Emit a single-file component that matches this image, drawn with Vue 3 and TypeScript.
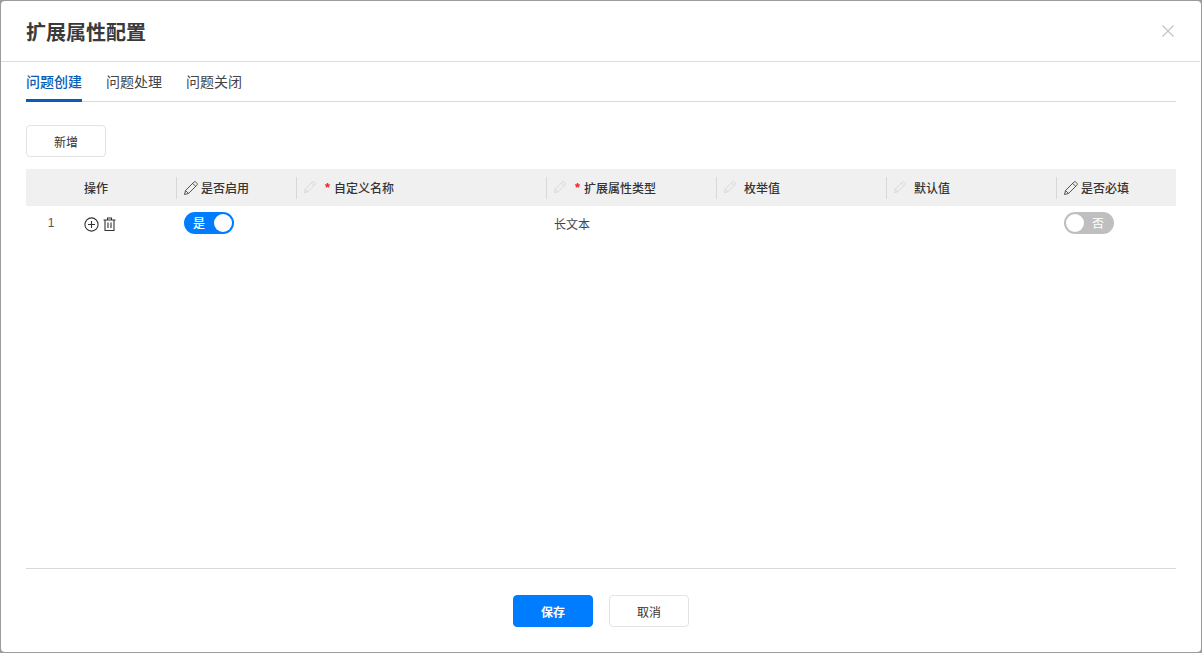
<script setup lang="ts">
interface Col { label: string; width: number; pen: 'dark' | 'light'; required?: boolean; gap?: boolean }
const cols: Col[] = [
  { label: '是否启用', width: 120, pen: 'dark' },
  { label: '自定义名称', width: 250, pen: 'light', required: true },
  { label: '扩展属性类型', width: 170, pen: 'light', required: true },
  { label: '枚举值', width: 170, pen: 'light', gap: true },
  { label: '默认值', width: 170, pen: 'light', gap: true },
  { label: '是否必填', width: 120, pen: 'dark' },
]
const tabs = ['问题创建', '问题处理', '问题关闭']
</script>

<template>
  <div class="screen">
    <div class="dialog">
      <header class="head">
        <h1 class="title">扩展属性配置</h1>
        <svg class="close" width="12" height="12" viewBox="0 0 12 12"><path d="M.5.5l11 11M11.5.5l-11 11" stroke="#c4c4c4" stroke-width="1.3" fill="none"/></svg>
      </header>
      <nav class="tabs">
        <span v-for="(t, i) in tabs" :key="t" class="tab" :class="{ active: i === 0 }">{{ t }}</span>
      </nav>
      <main class="body">
        <button class="btn add">新增</button>
        <div class="table">
          <div class="thead">
            <div class="th idx"></div>
            <div class="th ops">操作</div>
            <div v-for="c in cols" :key="c.label" class="th sep" :style="{ width: c.width + 'px' }">
              <svg class="pen" :class="c.pen" viewBox="1 1 13 13">
                <path d="M1.500 13.500l.9-3.700 7.600-7.600c.7-.7 1.600-.7 2.200 0l.6.6c.7.7.7 1.500 0 2.200l-7.600 7.600zM2.400 9.800l2.800 2.800M9 3.200l2.800 2.800" fill="none" stroke="currentColor" stroke-width=".85" stroke-linejoin="round"/>
              </svg>
              <span v-if="c.required" class="req">*</span>
              <span class="lbl" :class="{ spaced: c.gap }">{{ c.label }}</span>
            </div>
          </div>
          <div class="tr">
            <div class="td idx num">1</div>
            <div class="td ops icons">
              <svg width="15" height="15" viewBox="0 0 15 15"><circle cx="7.500" cy="7.500" r="6.600" fill="none" stroke="#333" stroke-width="1.1"/><path d="M7.500 4v7M4 7.500h7" stroke="#333" stroke-width="1.1"/></svg>
              <svg width="13" height="14" viewBox="0 0 13 14"><path d="M.5 3h12M4.500 3V1h4v2M2 3v10.500h9V3M5 5.500v5.500M8 5.500v5.500" fill="none" stroke="#333" stroke-width="1.1"/></svg>
            </div>
            <div class="td" style="width:120px"><span class="sw on"><span class="sw-text">是</span><i class="knob"></i></span></div>
            <div class="td" style="width:250px"></div>
            <div class="td text" style="width:170px">长文本</div>
            <div class="td" style="width:170px"></div>
            <div class="td" style="width:170px"></div>
            <div class="td" style="width:120px"><span class="sw off"><i class="knob"></i><span class="sw-text">否</span></span></div>
          </div>
        </div>
      </main>
      <footer class="foot">
        <button class="btn primary">保存</button>
        <button class="btn">取消</button>
      </footer>
    </div>
  </div>
</template>

<style>
html, body { margin: 0; padding: 0; overflow: hidden; }
</style>

<style scoped>
.screen {
  width: 1202px;
  height: 653px;
  box-sizing: border-box;
  padding: 1px;
  background: #9c9c9c;
  font-family: "Noto Sans CJK SC", "Liberation Sans", sans-serif;
  color: #333;
}
.dialog {
  height: 100%;
  background: #fff;
  border-radius: 4px;
  display: flex;
  flex-direction: column;
}
.head {
  height: 61px;
  flex: none;
  box-sizing: border-box;
  border-bottom: 1px solid #dcdcdc;
  display: flex;
  align-items: center;
  justify-content: space-between;
  padding: 0 26px 0 25px;
  margin-right: 1px;
}
.title {
  margin: 0;
  padding-top: 2px;
  font-size: 20px;
  font-weight: 700;
  line-height: 58px;
  color: #3a3a3a;
}
.tabs {
  display: flex;
  gap: 24px;
  height: 40px;
  box-sizing: border-box;
  margin: 0 25px;
  border-bottom: 1px solid #d9d9d9;
  flex: none;
}
.tab {
  font-size: 14px;
  line-height: 38px;
  height: 40px;
  box-sizing: border-box;
  color: #444;
}
.tab.active {
  color: #0a5cb5;
  font-weight: 500;
  border-bottom: 3px solid #0a5cb5;
}
.body {
  flex: 1;
  min-height: 0;
  padding: 23px 25px 0;
  display: flex;
  flex-direction: column;
  align-items: flex-start;
}
.btn {
  width: 80px;
  height: 32px;
  padding: 0;
  border: 1px solid #e3e3e3;
  border-radius: 4px;
  background: #fff;
  color: #333;
  font: 12px "Noto Sans CJK SC", "Liberation Sans", sans-serif;
}
.btn.primary {
  background: #007dff;
  border-color: #007dff;
  color: #fff;
  font-weight: 700;
}
.table { margin-top: 12px; width: 1150px; }
.thead { display: flex; height: 37px; background: #f0f0f0; align-items: center; }
.tr { display: flex; height: 34px; align-items: center; }
.idx { width: 50px; flex: none; }
.ops { width: 100px; flex: none; box-sizing: border-box; padding-left: 8px; }
.th {
  font-size: 12px;
  font-weight: 500;
  color: #333;
}
.th.sep {
  flex: none;
  box-sizing: border-box;
  height: 22px;
  border-left: 1px solid #d8d8d8;
  padding-left: 7px;
  display: flex;
  align-items: center;
}
.pen { flex: none; display: block; }
.pen.dark { color: #444; width: 14px; height: 14px; margin-right: 3px; margin-top: 1px; }
.pen.light { color: #d2d2d2; width: 12px; height: 12px; margin-right: 3px; margin-top: -1px; }
.req {
  color: #f5222d;
  margin-left: 6px;
  margin-right: 4px;
  font-size: 13px;
  font-weight: 700;
  font-family: "Liberation Sans", sans-serif;
}
.lbl.spaced { margin-left: 5px; }
.td { flex: none; box-sizing: border-box; padding-left: 8px; font-size: 12px; }
.td.idx { padding-left: 0; }
.num { text-align: center; color: #555; font-family: "Liberation Sans", sans-serif; }
.icons { display: flex; align-items: center; gap: 4px; padding-top: 2px; }
.text { color: #444; }
.sw {
  display: flex;
  width: 50px;
  height: 22px;
  border-radius: 11px;
  box-sizing: border-box;
  padding: 2px;
  align-items: center;
  justify-content: space-between;
  color: #fff;
  font-size: 12px;
  line-height: 18px;
}
.sw.on { background: #007dff; padding-left: 9px; }
.sw.off { background: #bfbfbf; padding-right: 10px; }
.sw.on .sw-text { font-weight: 500; }
.knob {
  width: 18px;
  height: 18px;
  border-radius: 50%;
  background: #fff;
  flex: none;
}
.foot {
  flex: none;
  height: 84px;
  box-sizing: border-box;
  margin: 0 25px;
  border-top: 1px solid #d9d9d9;
  padding-top: 26px;
  display: flex;
  justify-content: center;
  gap: 16px;
}
</style>
